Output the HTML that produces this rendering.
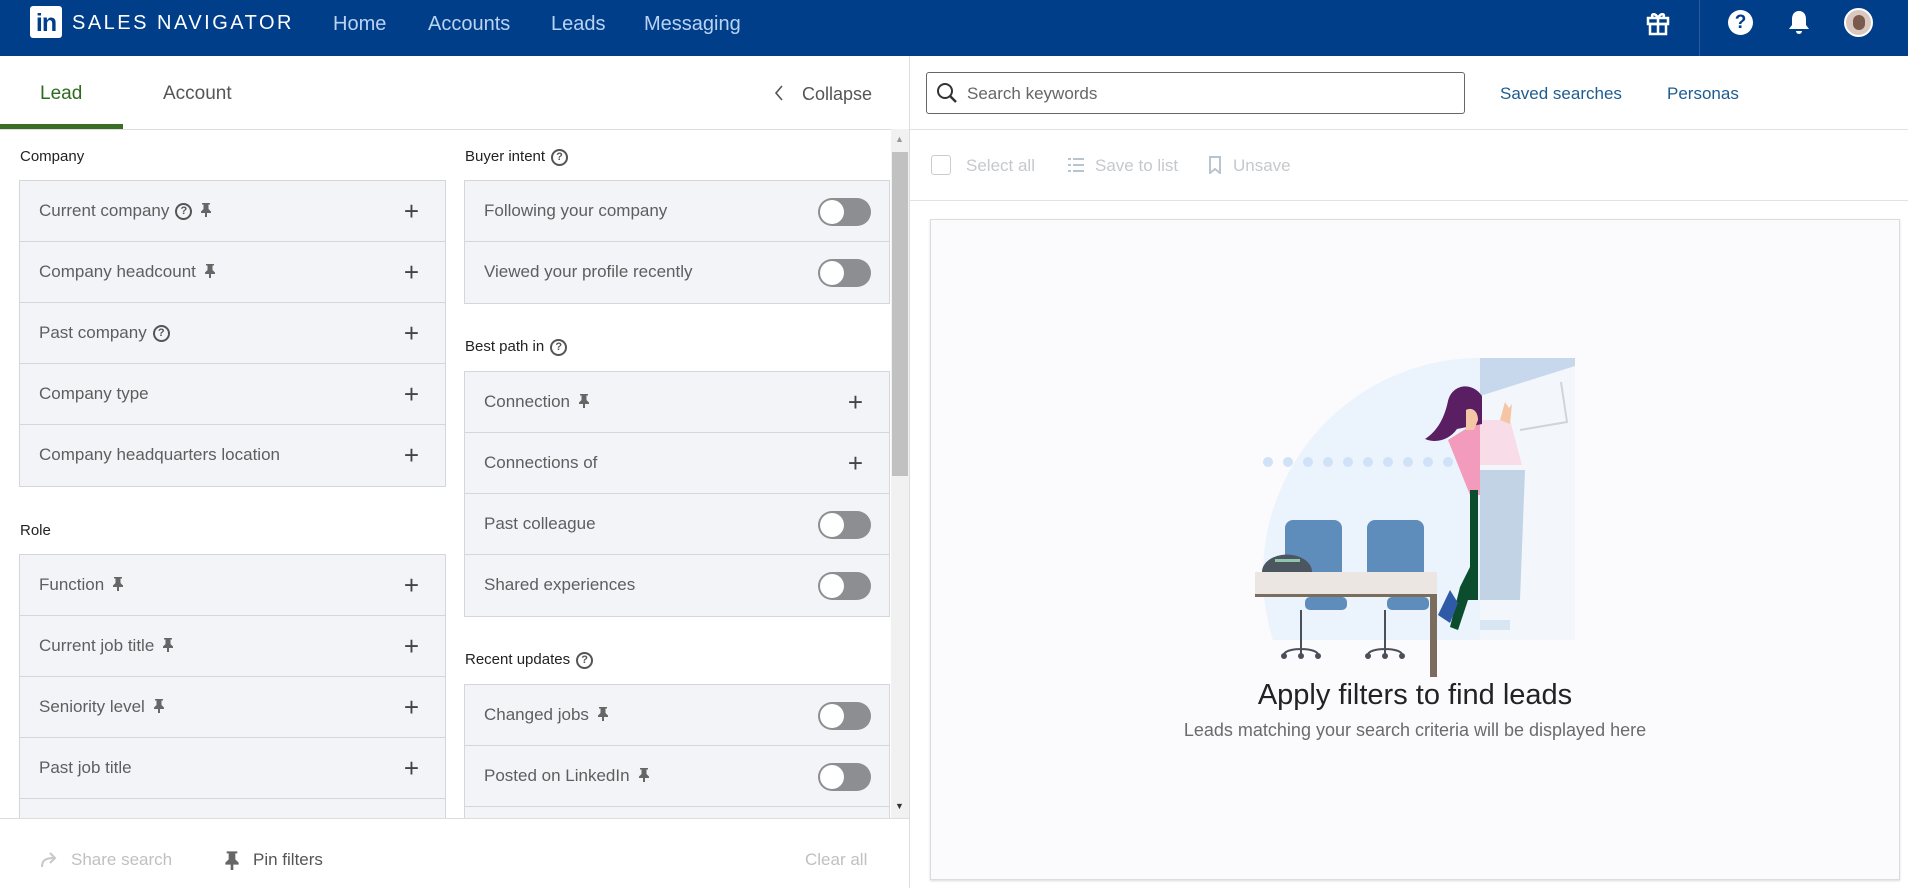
<!DOCTYPE html>
<html><head><meta charset="utf-8"><style>
*{box-sizing:border-box;margin:0;padding:0}
body{width:1908px;height:888px;overflow:hidden;background:#fff;font-family:"Liberation Sans",sans-serif;position:relative;color:#333}
.a{position:absolute}
.hdr{left:0;top:0;width:1908px;height:56px;background:#003e8a}
.nav{top:13px;font-size:20px;color:#b9d3f2}
.tab{font-size:19px;top:83px}
.lbl{font-size:15px;color:#222}
.box{background:#f3f4f8;border:1px solid #d6d6da}
.row{height:61px;border-bottom:1px solid #d6d6da;position:relative;font-size:17px;color:#5e5e5e;padding:0 0 0 19px;line-height:60px}
.row:last-child{border-bottom:none}
.plus{position:absolute;right:26px;top:0;font-size:26px;color:#444;font-weight:300}
.tg{position:absolute;right:18px;top:17px;width:53px;height:28px;border-radius:14px;background:#8d8e92}
.tg:after{content:"";position:absolute;left:2px;top:2px;width:24px;height:24px;border-radius:50%;background:#fff}
.q{display:inline-block;width:17px;height:17px;border:2px solid #555;border-radius:50%;font-size:11px;line-height:13px;text-align:center;font-weight:bold;color:#555;vertical-align:middle;margin-left:6px}
.pin{display:inline-block;width:12px;height:15px;margin-left:8px;vertical-align:middle;position:relative;top:-2px}
</style></head><body>
<svg width="0" height="0" style="position:absolute"><defs><symbol id="p" viewBox="0 0 12 15"><path d="M2 1h8v1.5h-1.5v4.5l2.5 2.5v1.5h-4v4h-2v-4h-4v-1.5l2.5-2.5v-4.5h-1.5z" fill="#666"/></symbol></defs></svg>
<div class="a hdr"></div>
<div class="a" style="left:30px;top:6px;width:32px;height:32px;background:#fff;border-radius:3px;color:#003e8a;font-weight:bold;font-size:25px;line-height:34px;text-align:center;letter-spacing:-1px">in</div>
<div class="a" style="left:72px;top:12px;color:#fff;font-size:20px;letter-spacing:2.5px">SALES NAVIGATOR</div>
<div class="a nav" style="left:333px">Home</div>
<div class="a nav" style="left:428px">Accounts</div>
<div class="a nav" style="left:551px">Leads</div>
<div class="a nav" style="left:644px">Messaging</div>
<div class="a" style="left:1699px;top:0;width:1px;height:56px;background:#2a5a9a"></div>
<svg class="a" style="left:1646px;top:10px" width="24" height="26" viewBox="0 0 24 26"><g fill="none" stroke="#fff" stroke-width="2.5"><rect x="2" y="8" width="20" height="6"/><rect x="4" y="14" width="16" height="10"/><path d="M12 8v16M12 8c-3-6-8-4-5 0M12 8c3-6 8-4 5 0"/></g></svg>
<div class="a" style="left:1728px;top:10px;width:25px;height:25px;border-radius:50%;background:#fff;color:#003e8a;font-weight:bold;font-size:19px;text-align:center;line-height:26px">?</div>
<svg class="a" style="left:1786px;top:9px" width="26" height="27" viewBox="0 0 26 27"><path d="M13 2c-5 0-7 4-7 8v6l-3 4h20l-3-4v-6c0-4-2-8-7-8z" fill="#fff"/><path d="M10 22a3 3 0 0 0 6 0z" fill="#fff"/></svg>
<div class="a" style="left:1844px;top:8px;width:29px;height:29px;border-radius:50%;background:#d9c8c0;border:2px solid #fff;overflow:hidden"><div style="margin:5px auto 0;width:12px;height:15px;border-radius:6px;background:#7a5a4a"></div></div>

<div class="a" style="left:909px;top:56px;width:1px;height:832px;background:#ddd"></div>
<div class="a tab" style="left:40px;color:#2e6b1f">Lead</div>
<div class="a tab" style="left:163px;color:#555">Account</div>
<div class="a" style="left:0;top:124px;width:123px;height:5px;background:#3b6e25"></div>
<div class="a" style="left:0;top:129px;width:909px;height:1px;background:#ddd"></div>
<svg class="a" style="left:774px;top:84px" width="10" height="18" viewBox="0 0 10 18"><path d="M8 2l-6 7 6 7" fill="none" stroke="#555" stroke-width="1.6"/></svg>
<div class="a" style="left:802px;top:84px;font-size:18px;color:#555">Collapse</div>

<div class="a lbl" style="left:20px;top:148px">Company</div>
<div class="a box" style="left:19px;top:180px;width:427px">
<div class="row">Current company<span class="q">?</span><svg class="pin"><use href="#p"/></svg><span class="plus">+</span></div>
<div class="row">Company headcount<svg class="pin"><use href="#p"/></svg><span class="plus">+</span></div>
<div class="row">Past company<span class="q">?</span><span class="plus">+</span></div>
<div class="row">Company type<span class="plus">+</span></div>
<div class="row">Company headquarters location<span class="plus">+</span></div>
</div>
<div class="a lbl" style="left:20px;top:522px">Role</div>
<div class="a box" style="left:19px;top:554px;width:427px;height:264px;overflow:hidden;border-bottom:none">
<div class="row">Function<svg class="pin"><use href="#p"/></svg><span class="plus">+</span></div>
<div class="row">Current job title<svg class="pin"><use href="#p"/></svg><span class="plus">+</span></div>
<div class="row">Seniority level<svg class="pin"><use href="#p"/></svg><span class="plus">+</span></div>
<div class="row">Past job title<span class="plus">+</span></div>
<div class="row" style="border-bottom:1px solid #d6d6da"></div>
</div>

<div class="a lbl" style="left:465px;top:148px">Buyer intent<span class="q">?</span></div>
<div class="a box" style="left:464px;top:180px;width:426px">
<div class="row">Following your company<span class="tg"></span></div>
<div class="row">Viewed your profile recently<span class="tg"></span></div>
</div>
<div class="a lbl" style="left:465px;top:338px">Best path in<span class="q">?</span></div>
<div class="a box" style="left:464px;top:371px;width:426px">
<div class="row">Connection<svg class="pin"><use href="#p"/></svg><span class="plus">+</span></div>
<div class="row">Connections of<span class="plus">+</span></div>
<div class="row">Past colleague<span class="tg"></span></div>
<div class="row">Shared experiences<span class="tg"></span></div>
</div>
<div class="a lbl" style="left:465px;top:651px">Recent updates<span class="q">?</span></div>
<div class="a box" style="left:464px;top:684px;width:426px;height:134px;overflow:hidden;border-bottom:none">
<div class="row">Changed jobs<svg class="pin"><use href="#p"/></svg><span class="tg"></span></div>
<div class="row">Posted on LinkedIn<svg class="pin"><use href="#p"/></svg><span class="tg"></span></div>
<div class="row"></div>
</div>
<div class="a" style="left:891px;top:129px;width:18px;height:689px;background:#f1f1f1"></div>
<div class="a" style="left:892px;top:152px;width:16px;height:324px;background:#c1c1c1"></div>
<div class="a" style="left:895px;top:134px;font-size:9px;color:#999">&#9650;</div>
<div class="a" style="left:895px;top:801px;font-size:9px;color:#333">&#9660;</div>

<div class="a" style="left:0;top:818px;width:909px;height:1px;background:#ddd"></div>
<svg class="a" style="left:40px;top:851px" width="20" height="18" viewBox="0 0 20 18"><path d="M2 16c0-7 4-9 12-9M10 2l5 5-5 5" fill="none" stroke="#c8c8c8" stroke-width="2"/></svg>
<div class="a" style="left:71px;top:850px;font-size:17px;color:#c0c0c0">Share search</div>
<svg class="a" style="left:224px;top:850px" width="16" height="20" viewBox="0 0 12 15"><use href="#p"/></svg>
<div class="a" style="left:253px;top:850px;font-size:17px;color:#555">Pin filters</div>
<div class="a" style="left:805px;top:850px;font-size:17px;color:#c0c0c0">Clear all</div>

<div class="a" style="left:926px;top:72px;width:539px;height:42px;border:1px solid #666;border-radius:3px"></div>
<svg class="a" style="left:936px;top:82px" width="22" height="22" viewBox="0 0 22 22"><circle cx="9" cy="9" r="7" fill="none" stroke="#333" stroke-width="2"/><path d="M14 14l6 6" stroke="#333" stroke-width="2.5"/></svg>
<div class="a" style="left:967px;top:84px;font-size:17px;color:#666">Search keywords</div>
<div class="a" style="left:1500px;top:84px;font-size:17px;color:#1e5c8f">Saved searches</div>
<div class="a" style="left:1667px;top:84px;font-size:17px;color:#1e5c8f">Personas</div>
<div class="a" style="left:910px;top:129px;width:998px;height:1px;background:#e2e2e2"></div>
<div class="a" style="left:931px;top:155px;width:20px;height:20px;border:1.5px solid #ccc;border-radius:3px"></div>
<div class="a" style="left:966px;top:156px;font-size:17px;color:#c5c8cc">Select all</div>
<svg class="a" style="left:1068px;top:158px" width="16" height="14" viewBox="0 0 16 14"><g fill="#b8c4d0"><rect x="0" y="0" width="3" height="2"/><rect x="5" y="0" width="11" height="2"/><rect x="0" y="6" width="3" height="2"/><rect x="5" y="6" width="11" height="2"/><rect x="0" y="12" width="3" height="2"/><rect x="5" y="12" width="11" height="2"/></g></svg>
<div class="a" style="left:1095px;top:156px;font-size:17px;color:#c5c8cc">Save to list</div>
<svg class="a" style="left:1209px;top:156px" width="12" height="18" viewBox="0 0 12 18"><path d="M1 1h10v16l-5-4-5 4z" fill="none" stroke="#b8c4d0" stroke-width="2"/></svg>
<div class="a" style="left:1233px;top:156px;font-size:17px;color:#c5c8cc">Unsave</div>
<div class="a" style="left:910px;top:200px;width:998px;height:1px;background:#e2e2e2"></div>
<div class="a" style="left:930px;top:219px;width:970px;height:661px;background:#fbfafd;border:1px solid #dcdcdc;box-shadow:0 1px 2px rgba(0,0,0,.15)"></div>

<svg class="a" style="left:1240px;top:350px" width="350" height="340" viewBox="1240 350 350 340">
<defs><clipPath id="c"><rect x="1240" y="350" width="335" height="290"/></clipPath></defs>
<circle cx="1480" cy="575" r="217" fill="#ebf3fc" clip-path="url(#c)"/>
<rect x="1480" y="358" width="95" height="282" fill="#f3f7fc"/>
<path d="M1480 358h95v8l-95 30z" fill="#c7d8ec"/>
<path d="M1520 430l47 -8l-6 -40" stroke="#d0d4da" stroke-width="2" fill="none"/>
<g fill="#cfe2f7"><circle cx="1268" cy="462" r="5"/><circle cx="1288" cy="462" r="5"/><circle cx="1308" cy="462" r="5"/><circle cx="1328" cy="462" r="5"/><circle cx="1348" cy="462" r="5"/><circle cx="1368" cy="462" r="5"/><circle cx="1388" cy="462" r="5"/><circle cx="1408" cy="462" r="5"/><circle cx="1428" cy="462" r="5"/><circle cx="1448" cy="462" r="5"/></g>
<rect x="1285" y="520" width="57" height="62" rx="8" fill="#5f8dbb"/>
<rect x="1367" y="520" width="57" height="62" rx="8" fill="#5f8dbb"/>
<path d="M1262 572a20 14 0 0 1 50 0z" fill="#4b5660"/>
<rect x="1275" y="559" width="25" height="3" fill="#8fc6a9"/>
<rect x="1255" y="572" width="182" height="23" fill="#ebe6e2"/>
<rect x="1255" y="594" width="182" height="3" fill="#7a6d5e"/>
<rect x="1430" y="595" width="7" height="82" fill="#7a6d5e"/>
<rect x="1305" y="597" width="42" height="13" rx="5" fill="#5f8dbb"/>
<rect x="1387" y="597" width="42" height="13" rx="5" fill="#5f8dbb"/>
<g stroke="#4b4f5a" stroke-width="2" fill="none"><path d="M1301 610v45M1284 655c0-8 34-8 34 0M1385 610v45M1368 655c0-8 34-8 34 0"/></g>
<g fill="#4b4f5a"><circle cx="1284" cy="656" r="3"/><circle cx="1301" cy="656" r="3"/><circle cx="1318" cy="656" r="3"/><circle cx="1368" cy="656" r="3"/><circle cx="1385" cy="656" r="3"/><circle cx="1402" cy="656" r="3"/></g>
<path d="M1480 420h30l12 45h-42z" fill="#f8dce8"/>
<path d="M1480 470h45l-5 130h-40z" fill="#c2d3e6"/>
<path d="M1480 620h30v10h-30z" fill="#d8e6f4"/>
<path d="M1448 440l32 -20v75h-10z" fill="#f29bbd"/>
<path d="M1478 490v110h-10l-10 30l-8 -3l10 -40l10 -20v-77z" fill="#0b4d2d"/>
<path d="M1450 590l-12 25l12 8l8-20z" fill="#2e5aa8"/>
<path d="M1482 396c-10-15-30-12-34 5c-3 15-10 30-23 38c12 5 25 0 32-10l25-5z" fill="#5a1f63"/>
<path d="M1466 410c5-3 12 0 12 10l-4 10h-8z" fill="#f5c6a5"/>
<path d="M1500 420l5-18l4 6l3-4l-2 20z" fill="#f5c6a5"/>
</svg>
<div class="a" style="left:1230px;top:679px;width:370px;text-align:center;font-size:29px;color:#222">Apply filters to find leads</div>
<div class="a" style="left:1130px;top:720px;width:570px;text-align:center;font-size:18px;color:#6b6b6b">Leads matching your search criteria will be displayed here</div>
</body></html>
